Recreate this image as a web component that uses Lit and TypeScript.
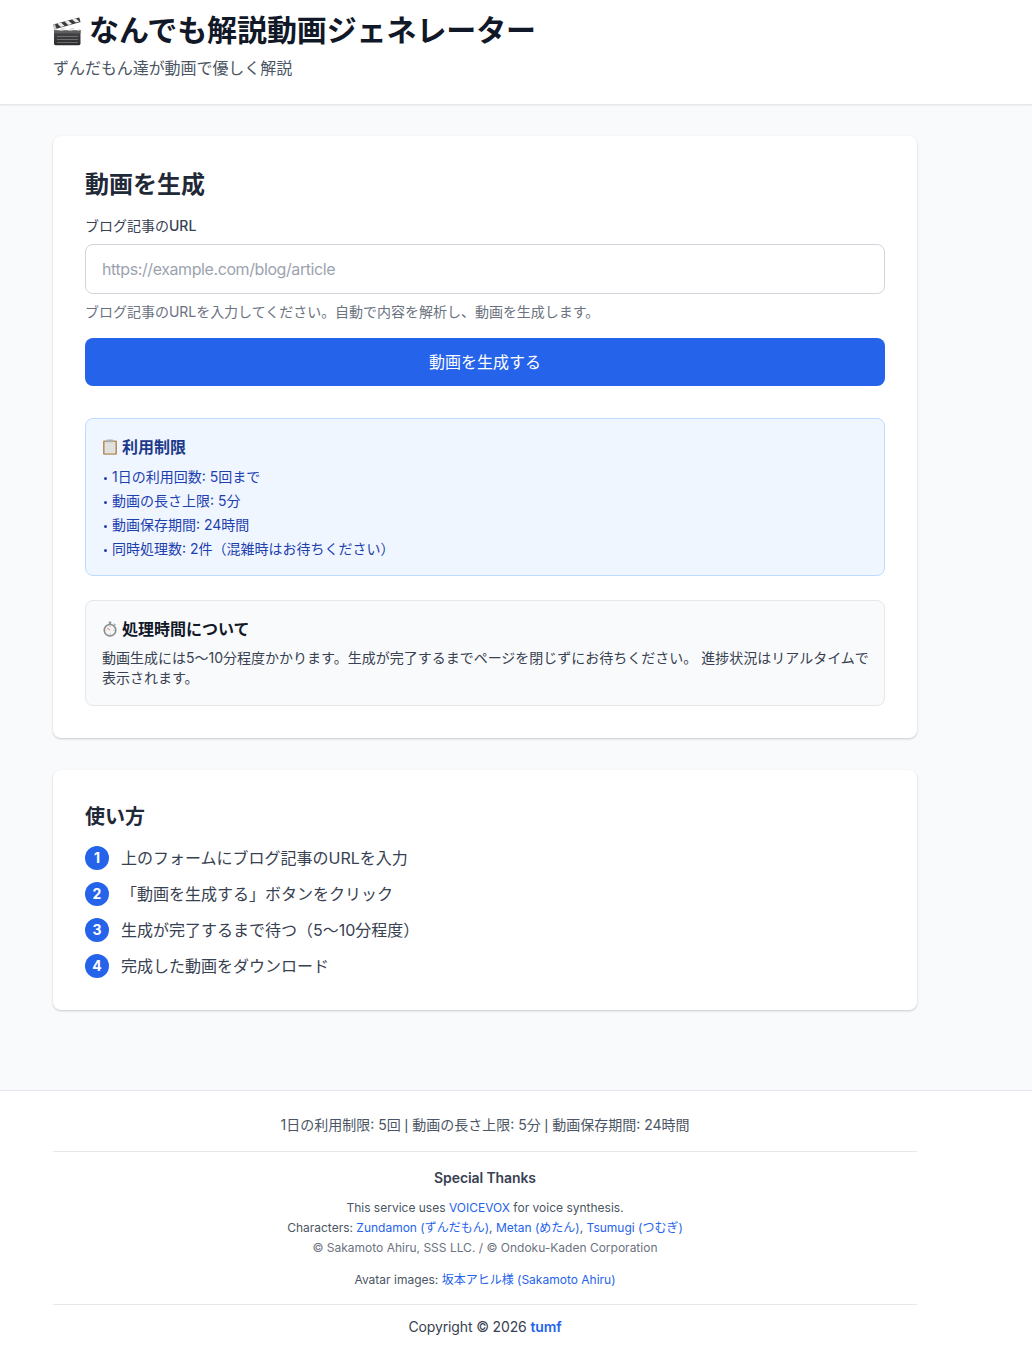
import { LitElement, html, css } from "lit";
import { customElement } from "lit/decorators.js";

const clapper = html`<svg class="emoji e-h1" viewBox="0 0 30 30">
  <defs><linearGradient id="cb" x1="0" y1="0" x2="0" y2="1"><stop offset="0" stop-color="#4a4a4c"/><stop offset="1" stop-color="#2b2b2d"/></linearGradient></defs>
  <path d="M2 14h26.5v13.6a1.6 1.6 0 0 1-1.6 1.6H3.6A1.6 1.6 0 0 1 2 27.6z" fill="url(#cb)"/>
  <path d="M2 14h26.5v3.2H2z" fill="#5e5e60"/>
  <path d="M5 20.5h21M5 23.5h21M5 26.5h21" stroke="#7b7b7d" stroke-width=".8"/>
  <path d="M3 14.4h4l3-2.4h4l-3 2.4h5l3-2.4h4l-3 2.4h5l2.5-2v2.4H3z" fill="#dcdcdc" opacity=".9"/>
  <path d="M1 8.6 27.2 1.4l1.4 4.6L2.8 13.2z" fill="#3b3b3d"/>
  <path d="M5.2 7.4l3.8-1 3.6 3.6-3.8 1zM12.6 5.4l3.8-1 3.6 3.6-3.8 1zM20 3.4l3.8-1 3.6 3.2-3.6 1z" fill="#ececec"/>
  <path d="M.8 8.6 2.6 14l2.2-.6L3 8z" fill="#c4c4c6"/>
</svg>`;
const clipboard = html`<svg class="emoji" viewBox="0 0 16 16">
  <rect x="1" y="1.6" width="14" height="14.2" rx="1.2" fill="#b58f5f"/>
  <rect x="2.6" y="3" width="10.8" height="11.4" fill="#e4e4e2"/>
  <path d="M4 5h8M4 7.5h8M4 10h8M4 12.5h8" stroke="#d6d6d4" stroke-width=".7"/>
  <rect x="5" y=".4" width="6" height="2.8" rx=".6" fill="#a9b0b8"/>
</svg>`;
const timer = html`<svg class="emoji" viewBox="0 0 16 16">
  <rect x="6.6" y=".6" width="2.8" height="1.8" rx=".4" fill="#9a9a9c"/>
  <rect x="7.4" y="2" width="1.2" height="1.2" fill="#77777a"/>
  <path d="m12.2 2.2 1.8 1.5-.9 1-1.7-1.5z" fill="#aaaaac"/>
  <circle cx="8" cy="9.2" r="6.5" fill="#8b8b8e"/>
  <circle cx="8" cy="9.2" r="5" fill="#f5f5f3"/>
  <path d="M8 9.2 5.2 7" stroke="#c9694e" stroke-width=".9"/>
  <path d="M8 4.8v1M8 12.6v1M3.6 9.2h1M11.4 9.2h1" stroke="#8a8a8a" stroke-width=".7"/>
</svg>`;

@customElement("app-root")
export class AppRoot extends LitElement {
  static styles = css`
    :host {
      display: block;
      min-height: 1360px;
      background: #f9fafb;
      color: #111827;
      font-family: Inter, "Noto Sans CJK JP", sans-serif;
      font-size: 16px;
      line-height: 24px;
    }
    * { box-sizing: border-box; }
    a { color: #2563eb; text-decoration: none; }
    .wrap { width: 864px; margin-left: 53px; }
    header {
      height: 105px;
      background: #fff;
      border-bottom: 1px solid #e5e7eb;
      box-shadow: 0 1px 2px rgba(0,0,0,.05);
    }
    h1 {
      margin: 0;
      padding-top: 9px;
      height: 50px;
      font-size: 30px;
      line-height: 40px;
      font-weight: 700;
      color: #111827;
      display: flex;
      align-items: center;
      gap: 7px;
      letter-spacing: -0.1px;
    }
    .sub { margin: 6px 0 0; font-size: 16px; line-height: 24px; color: #4b5563; letter-spacing: -0.06px; }
    .emoji { width: 16px; height: 16px; flex: none; }
    .e-h1 { width: 30px; height: 30px; margin-left: -1px; margin-top: 2px; }
    main { padding-top: 31px; display: flex; flex-direction: column; gap: 32px; height: 985px; }
    .card {
      background: #fff;
      border-radius: 8px;
      box-shadow: 0 1px 3px rgba(0,0,0,.1), 0 1px 2px rgba(0,0,0,.1);
      padding: 32px;
    }
    h2 { margin: 0; padding-top: 1px; font-size: 24px; line-height: 32px; font-weight: 600; color: #1f2937; }
    h2.small { font-size: 20px; line-height: 28px; }
    label { display: block; margin-top: 15px; font-size: 14px; line-height: 20px; font-weight: 400; color: #374151; }
    label b { font-weight: 500; }
    .input {
      margin-top: 8px;
      height: 50px;
      border: 1px solid #d1d5db;
      border-radius: 8px;
      padding: 0 16px;
      display: flex;
      align-items: center;
      font-size: 16px;
      letter-spacing: -0.41px;
      color: #9ca3af;
    }
    .hint { margin: 8px 0 0; font-size: 14px; line-height: 20px; color: #6b7280; letter-spacing: -0.02px; }
    .btn {
      margin-top: 16px;
      height: 48px;
      border-radius: 8px;
      background: #2563eb;
      color: #fff;
      display: flex;
      align-items: center;
      justify-content: center;
      font-size: 16px;
      font-weight: 400;
    }
    .box { border-radius: 8px; padding: 16px; border: 1px solid; }
    .limits { margin-top: 32px; background: #eff6ff; border-color: #bfdbfe; height: 158px; }
    .about { margin-top: 24px; background: #f9fafb; border-color: #e5e7eb; height: 106px; }
    h3 {
      margin: 0;
      font-size: 16px;
      line-height: 24px;
      font-weight: 600;
      display: flex;
      align-items: center;
      gap: 4px;
    }
    .limits h3 { color: #1e3a8a; }
    .about h3 { color: #111827; }
    ul { margin: 6px 0 0; padding: 0; list-style: none; font-size: 14px; line-height: 24px; color: #1e40af; }
    li { display: flex; align-items: center; gap: 5px; }
    li::before { content: ""; width: 3px; height: 3px; margin-left: 2px; border-radius: 50%; background: #1e40af; margin-top: 2px; flex: none; }
    .about p { margin: 7px -2px 0 0; font-size: 14px; line-height: 20px; color: #374151; }
    ol { margin: 15px 0 0; padding: 0; list-style: none; display: flex; flex-direction: column; gap: 12px; }
    ol li { gap: 12px; color: #374151; font-size: 16px; }
    ol li::before { display: none; }
    .num {
      width: 24px;
      height: 24px;
      border-radius: 50%;
      background: #2563eb;
      color: #fff;
      font-size: 14px;
      font-weight: 700;
      display: flex;
      align-items: center;
      justify-content: center;
      flex: none;
    }
    footer { background: #fff; border-top: 1px solid #e5e7eb; height: 270px; text-align: center; font-size: 14px; color: #4b5563; }
    .f1 { padding: 22px 0 14px; line-height: 24px; border-bottom: 1px solid #e5e7eb; }
    .pipe { font-family: "Liberation Sans", sans-serif; }
    .thanks { padding-top: 16px; height: 153px; border-bottom: 1px solid #e5e7eb; font-size: 12px; line-height: 20px; }
    .thanks h4 { margin: 0 0 10px; font-size: 14px; line-height: 20px; font-weight: 600; color: #374151; letter-spacing: -0.1px; }
    .thanks p { margin: 0; }
    .muted { color: #6b7280; }
    .avatar { margin-top: 12px !important; }
    .copy { padding-top: 10px; color: #374151; letter-spacing: -0.14px; }
    .copy a { font-weight: 600; }
  `;

  render() {
    const steps = [
      "上のフォームにブログ記事のURLを入力",
      "「動画を生成する」ボタンをクリック",
      "生成が完了するまで待つ（5〜10分程度）",
      "完成した動画をダウンロード",
    ];
    const limits = [
      "1日の利用回数: 5回まで",
      "動画の長さ上限: 5分",
      "動画保存期間: 24時間",
      "同時処理数: 2件（混雑時はお待ちください）",
    ];
    return html`
      <header>
        <div class="wrap">
          <h1>${clapper}<span>なんでも解説動画ジェネレーター</span></h1>
          <p class="sub">ずんだもん達が動画で優しく解説</p>
        </div>
      </header>
      <main class="wrap">
        <section class="card">
          <h2>動画を生成</h2>
          <label>ブログ記事の<b>URL</b></label>
          <div class="input">https://example.com/blog/article</div>
          <p class="hint">ブログ記事のURLを入力してください。自動で内容を解析し、動画を生成します。</p>
          <div class="btn">動画を生成する</div>
          <div class="box limits">
            <h3>${clipboard}<span>利用制限</span></h3>
            <ul>${limits.map((t) => html`<li>${t}</li>`)}</ul>
          </div>
          <div class="box about">
            <h3>${timer}<span>処理時間について</span></h3>
            <p>動画生成には5〜10分程度かかります。生成が完了するまでページを閉じずにお待ちください。 進捗状況はリアルタイムで表示されます。</p>
          </div>
        </section>
        <section class="card">
          <h2 class="small">使い方</h2>
          <ol>${steps.map((t, i) => html`<li><span class="num">${i + 1}</span><span>${t}</span></li>`)}</ol>
        </section>
      </main>
      <footer>
        <div class="wrap">
          <div class="f1">1日の利用制限: 5回 <span class="pipe">|</span> 動画の長さ上限: 5分 <span class="pipe">|</span> 動画保存期間: 24時間</div>
          <div class="thanks">
            <h4>Special Thanks</h4>
            <p>This service uses <a href="#">VOICEVOX</a> for voice synthesis.</p>
            <p>Characters: <a href="#">Zundamon (ずんだもん)</a>, <a href="#">Metan (めたん)</a>, <a href="#">Tsumugi (つむぎ)</a></p>
            <p class="muted">© Sakamoto Ahiru, SSS LLC. / © Ondoku-Kaden Corporation</p>
            <p class="avatar">Avatar images: <a href="#">坂本アヒル様 (Sakamoto Ahiru)</a></p>
          </div>
          <div class="copy">Copyright © 2026 <a href="#">tumf</a></div>
        </div>
      </footer>
    `;
  }
}
